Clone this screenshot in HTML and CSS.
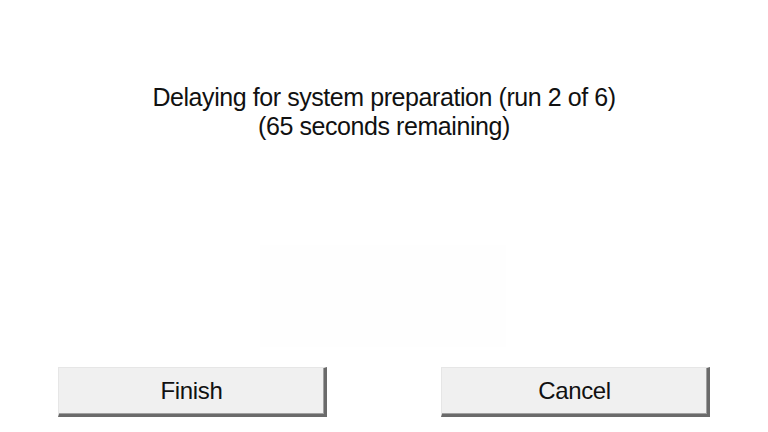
FILE: index.html
```html
<!DOCTYPE html>
<html>
<head>
<meta charset="utf-8">
<link rel="stylesheet" href="styles.css">
</head>
<body>
<div class="dialog">
  <div class="message">
    <p class="line">Delaying for system preparation (run 2 of 6)</p>
    <p class="line">(65 seconds remaining)</p>
  </div>
  <div class="spacer"><div class="ghost"></div></div>
  <div class="buttons">
    <button class="btn">Finish</button>
    <button class="btn">Cancel</button>
  </div>
</div>
</body>
</html>
```
FILE: styles.css
```css
html, body {
  margin: 0;
  padding: 0;
  background: #ffffff;
}
.dialog {
  width: 768px;
  height: 432px;
  display: flex;
  flex-direction: column;
  font-family: "Liberation Sans", Arial, sans-serif;
  color: #111111;
}
.message {
  padding-top: 83px;
  text-align: center;
}
.line {
  margin: 0;
  font-size: 25px;
  line-height: 29px;
  letter-spacing: -0.43px;
}
.spacer {
  flex: 1;
  display: flex;
  justify-content: center;
  align-items: flex-start;
  padding-top: 104px;
}
.ghost {
  width: 246px;
  height: 102px;
  background: #fefefe;
  margin-left: -2px;
}
.buttons {
  display: flex;
  justify-content: space-between;
  padding: 0 58px 15px 58px;
}
.btn {
  width: 269px;
  height: 50px;
  background: #f0f0f0;
  border-style: solid;
  border-width: 1px 3px 3px 1px;
  border-color: #e6e6e6 #6a6a6a #6a6a6a #e6e6e6;
  box-shadow: inset -1px -1px 0 #a0a0a0;
  font-family: "Liberation Sans", Arial, sans-serif;
  font-size: 24px;
  letter-spacing: -0.35px;
  color: #111111;
  padding: 0;
  margin: 0;
}
```
